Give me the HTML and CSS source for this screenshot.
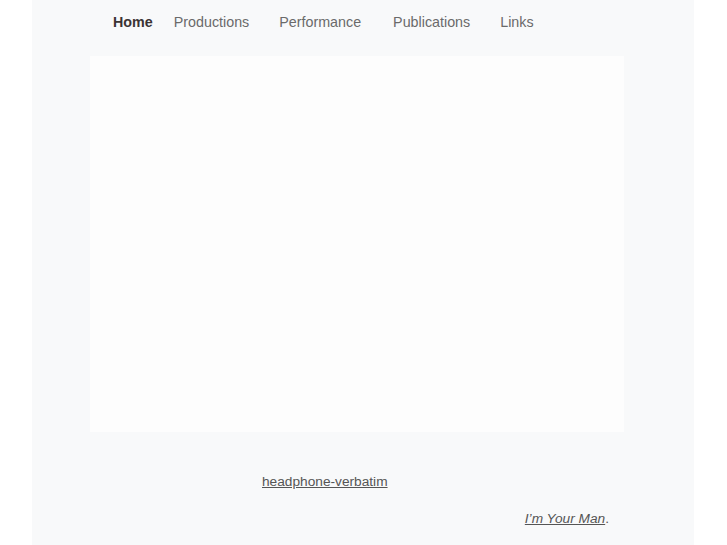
FILE: index.html
```html
<!DOCTYPE html>
<html lang="en">
<head>
<meta charset="utf-8">
<title>Home</title>
<link rel="stylesheet" href="styles.css">
</head>
<body>
<div class="page">
  <nav class="nav">
    <a class="nav-item nav-home" href="#">Home</a>
    <a class="nav-item" href="#">Productions</a>
    <a class="nav-item nav-wide" href="#">Performance</a>
    <a class="nav-item" href="#">Publications</a>
    <a class="nav-item" href="#">Links</a>
  </nav>
  <div class="stage"></div>
  <p class="line line-first"><a href="#">headphone-verbatim</a></p>
  <p class="line line-second"><em><a href="#">I’m Your Man</a></em>.</p>
</div>
</body>
</html>
```
FILE: styles.css
```css
html, body {
  margin: 0;
  padding: 0;
  background: #ffffff;
}
body {
  font-family: "Liberation Sans", Arial, sans-serif;
  color: #555555;
}
.page {
  margin: 0 33px 0 32px;
  min-height: 545px;
  background: #f8f9fa;
  overflow: hidden;
}
.nav {
  display: flex;
  align-items: baseline;
  padding: 14px 0 25px 81px;
  height: 17px;
  line-height: 17px;
  font-size: 14.3px;
}
.nav-item {
  color: #6a6a6a;
  text-decoration: none;
  margin-right: 30px;
}
.nav-wide {
  margin-right: 32px;
}
.nav-home {
  color: #3b3434;
  font-weight: bold;
  margin-right: 21px;
}
.stage {
  margin-left: 58px;
  width: 534px;
  height: 376px;
  background: #fdfdfd;
}
.line {
  margin: 0;
  font-size: 13.7px;
  line-height: 18px;
}
.line a {
  color: #555555;
}
.line-first {
  margin-top: 41px;
  padding-left: 230px;
}
.line-second {
  margin-top: 19px;
  text-align: right;
  padding-right: 85px;
}
```
